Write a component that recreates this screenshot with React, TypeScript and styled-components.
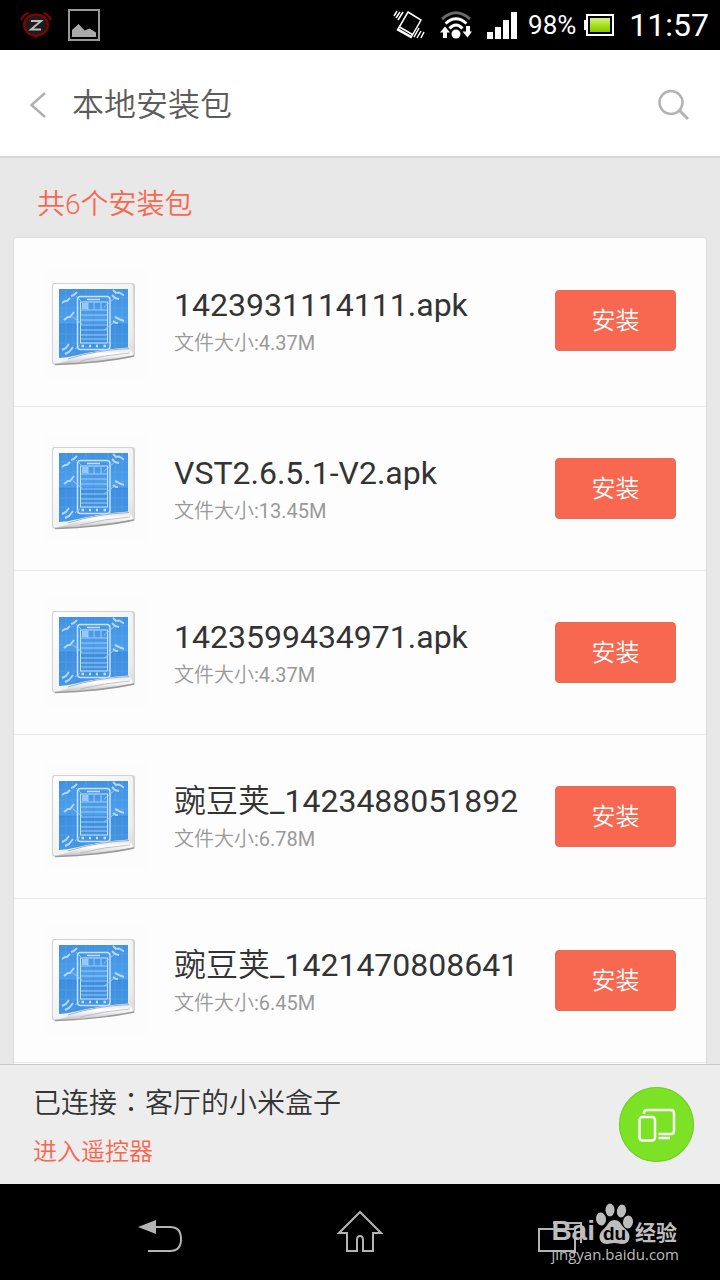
import React from "react";
import styled, { createGlobalStyle } from "styled-components";

const GlobalStyle = createGlobalStyle`
  * { box-sizing: border-box; }
  body {
    margin: 0;
    background: #e8e8e8;
    font-family: Roboto, "Noto Sans CJK SC DemiLight", "Noto Sans CJK SC", sans-serif;
    font-weight: 400;
    font-kerning: none;
  }
  button {
    border: 0;
    padding: 0;
    background: none;
    font: inherit;
    cursor: pointer;
  }
  svg { display: block; }
`;

const Screen = styled.div`
  display: flex;
  flex-direction: column;
  height: 100vh;
`;

const StatusBar = styled.div`
  flex: none;
  display: flex;
  align-items: center;
  justify-content: space-between;
  height: 50px;
  padding: 0 11px 0 20px;
  background: #000;
  color: #fff;
`;

const StatusGroup = styled.div<{ $gap: number }>`
  display: flex;
  align-items: center;
  gap: ${(p) => p.$gap}px;
`;

const Battery = styled.span`
  display: flex;
  align-items: center;
  gap: 8px;
  font-size: 26px;
  line-height: 32px;
`;

const Clock = styled.time`
  font-size: 32px;
  line-height: 40px;
`;

const Header = styled.header`
  flex: none;
  display: flex;
  align-items: center;
  height: 108px;
  padding: 4px 28px 0;
  background: #fff;
  border-bottom: 2px solid #d8d8d8;
`;

const IconButton = styled.button`
  flex: none;
  display: flex;
  align-items: center;
  justify-content: center;
`;

const Title = styled.h1`
  flex: 1;
  margin: 0 0 0 24px;
  font-size: 32px;
  line-height: 40px;
  font-weight: 350;
  color: #5c5c5c;
`;

const Content = styled.main`
  flex: 1;
  min-height: 0;
  overflow: hidden;
  padding: 0 13px;
  background: #e8e8e8;
`;

const Summary = styled.p`
  margin: 0;
  padding: 27px 24px 12px;
  font-size: 28px;
  line-height: 40px;
  font-weight: 350;
  color: #f8674f;
`;

const Card = styled.ul`
  min-height: 100%;
  margin: 0;
  padding: 1px 0 0;
  list-style: none;
  background: #fdfdfd;
  border: 1px solid #dcdcdc;
  border-radius: 4px;
`;

const Row = styled.li`
  display: flex;
  align-items: flex-start;
  height: 164px;
  padding: 0 30px 0 28px;
  border-bottom: 1px solid #e8e8e8;

  &:first-child { height: 168px; }
`;

const Thumb = styled.div`
  flex: none;
  align-self: flex-end;
  margin: 0 24px 28px 0;
`;

const Details = styled.div`
  flex: 1;
  min-width: 0;
  padding-top: 46px;
`;

const FileName = styled.h2`
  margin: 0 0 4px;
  font-size: 32px;
  line-height: 40px;
  font-weight: 400;
  white-space: nowrap;
  color: #333;
`;

const FileSize = styled.p`
  margin: 0;
  font-size: 20px;
  line-height: 28px;
  color: #999;
`;

const InstallButton = styled.button`
  flex: none;
  width: 121px;
  height: 61px;
  margin-top: 51px;
  border: 1px solid #dd705d;
  border-radius: 4px;
  background: #f8674f;
  font-size: 24px;
  line-height: 32px;
  font-weight: 350;
  color: #fff;
`;

const ConnectionBar = styled.footer`
  flex: none;
  display: flex;
  align-items: center;
  justify-content: space-between;
  height: 120px;
  padding: 0 26px 0 33px;
  background: #ededed;
  border-top: 1px solid #c8c8c8;
`;

const Connected = styled.p`
  margin: 0 0 12px;
  font-size: 28px;
  line-height: 40px;
  font-weight: 350;
  color: #333;
`;

const Colon = styled.span`
  font-family: "Noto Sans CJK TC", sans-serif;
`;

const RemoteLink = styled.a`
  display: block;
  font-size: 24px;
  line-height: 32px;
  font-weight: 350;
  color: #f8674f;
  text-decoration: none;
`;

const CastButton = styled(IconButton)`
  width: 75px;
  height: 75px;
  border-radius: 50%;
  background: #7be226;
  box-shadow: inset 0 0 0 1px #72cf27;
`;

const NavBar = styled.nav`
  position: relative;
  flex: none;
  display: grid;
  grid-template-columns: repeat(3, 1fr);
  height: 96px;
  padding: 0 60px;
  background: #000;
`;

const Watermark = styled.div`
  position: absolute;
  right: 41px;
  bottom: 17px;
  color: #bdbdbd;
`;

const Brand = styled.div`
  display: flex;
  align-items: flex-end;
  font-family: "Liberation Sans", "Noto Sans CJK SC", sans-serif;
  font-size: 28px;
  line-height: 28px;
  font-weight: 700;
`;

const BrandSuffix = styled.span`
  font-family: "Noto Sans CJK SC", sans-serif;
  font-size: 21px;
  line-height: 28px;
`;

const SiteName = styled.div`
  font-family: "Open Sans", sans-serif;
  font-size: 15px;
  line-height: 18px;
  font-weight: 500;
`;

const AlarmIcon = () => (
  <svg width="32" height="30" viewBox="0 0 32 30" fill="none" aria-hidden="true">
    <ellipse cx="16" cy="15" rx="12" ry="10.5" fill="#1c1c1c" stroke="#8a0000" strokeWidth="2" />
    <path d="M1 10Q3 5 8 3M31 10Q29 5 24 3" stroke="#8a0000" strokeWidth="2" />
    <path d="M13.5 25.5h5L16 28.5z" fill="#8a0000" />
    <path d="M11 11h10L11 19.500h10" stroke="#bbb" strokeWidth="2" />
  </svg>
);

const PictureIcon = () => (
  <svg width="32" height="32" viewBox="0 0 32 32" fill="none" aria-hidden="true">
    <rect x="1" y="1" width="30" height="30" stroke="#999" strokeWidth="2" />
    <path d="M4 28v-7l6.500-6 6 6.500 5-2 6.500 4v4.500z" fill="#aaa" />
  </svg>
);

const VibrateIcon = () => (
  <svg width="32" height="30" viewBox="0 0 32 30" fill="none" stroke="#fff" strokeWidth="1.500" aria-hidden="true">
    <path d="M15 2L28 10 18 27.500 4.500 20zM6.500 17l13 7.500M5 19l13 7.500" />
    <path d="M4 1L1 6M7 2L3 8M10 2L5 10M26 18l-5 9M28 21l-4 7M31 22l-3 6" />
  </svg>
);

const WifiIcon = () => (
  <svg width="32" height="30" viewBox="0 0 32 30" fill="none" strokeWidth="3" aria-hidden="true">
    <path d="M2 9Q16-3.500 30 9" stroke="#6a6a6a" />
    <path d="M5.500 13.500Q16 4 26.500 13.500M9.500 18.500Q16 11.500 22.500 18.500" stroke="#fff" />
    <circle cx="16" cy="24" r="4.500" fill="#fff" />
    <path d="M5 16.500l5 6H7V28H3v-5.500H0zM27.500 27.500l-5-6H26V16h4v5.500h2z" fill="#fff" />
  </svg>
);

const SignalIcon = () => (
  <svg width="30" height="28" viewBox="0 0 30 28" fill="#fff" aria-hidden="true">
    <path d="M0 21h6v7H0zM8 16h6v12H8zM16 9h6v19h-6zM24 1h6v27h-6z" />
  </svg>
);

const BatteryIcon = () => (
  <svg width="30" height="22" viewBox="0 0 30 22" aria-hidden="true">
    <defs>
      <linearGradient id="charge" x1="0" y1="0" x2="0" y2="1">
        <stop offset="0" stopColor="#d9f28a" />
        <stop offset=".5" stopColor="#a6e01c" />
        <stop offset="1" stopColor="#84c800" />
      </linearGradient>
    </defs>
    <rect x="3" y="1" width="26" height="20" fill="none" stroke="#fff" strokeWidth="2" />
    <rect x="0" y="6" width="2" height="10" fill="#fff" />
    <rect x="6" y="4" width="20" height="14" fill="url(#charge)" />
  </svg>
);

const BlueprintIcon = () => (
  <svg width="108" height="108" viewBox="0 0 108 108" fill="none" aria-hidden="true">
    <defs>
      <linearGradient id="sheet" x1="0" y1="0" x2="0" y2="1">
        <stop offset="0" stopColor="#4193e2" />
        <stop offset=".5" stopColor="#4b9fec" />
        <stop offset=".51" stopColor="#3d8ede" />
        <stop offset="1" stopColor="#4598e6" />
      </linearGradient>
      <linearGradient id="curl" x1="0" y1="0" x2=".12" y2="1">
        <stop offset="0" stopColor="#d8d8d8" />
        <stop offset=".45" stopColor="#fff" />
        <stop offset="1" stopColor="#c2c2c2" />
      </linearGradient>
      <linearGradient id="paper" x1="0" y1="0" x2="1" y2="1">
        <stop offset="0" stopColor="#fff" />
        <stop offset=".8" stopColor="#ececee" />
        <stop offset="1" stopColor="#d0d0d2" />
      </linearGradient>
    </defs>
    <rect width="108" height="108" rx="12" fill="#fcfcfc" />
    <path d="M12 13h78q3 0 3 3v70q-32 6-79 9-4 0-4-3V16q0-3 2-3z" fill="#d2d2d2" />
    <path d="M13 14h76q2 0 2 3l1 68q-32 6-77 9-4 0-4-3V17q0-3 2-3z" fill="url(#paper)" />
    <path d="M17 19h69v58.500q-28 2-52 8-9 2-17 2.500z" fill="url(#sheet)" />
    <path d="M24 19v68M31 19v67M44 19v65M52.500 19v63M66 19v60M73 19v59M80 19v58M17 28h69M17 38h69M17 47h69M17 64h69M17 73h69" stroke="#71b2f2" strokeWidth=".6" opacity=".5" />
    <path d="M17 54h69M52 19v64" stroke="#2f7dcc" opacity=".4" />
    <g stroke="#c5e1fb">
      <rect x="35.500" y="26.500" width="32.500" height="53" rx="3" strokeWidth="1.500" />
      <rect x="38.500" y="32" width="27" height="41" />
      <path d="M45 29.500h13" strokeWidth="1.500" />
      <path d="M39 40h26M39 45h26M39 50h26M39 55h26M39 60h26M39 65h26M39 69h26M46 33v7M52 33v7M59 33v7" opacity=".7" />
      <path d="M39.500 76h2.500M47 76h2M54 76h2M61.500 76h2.500" strokeWidth="2.500" />
      <path d="M40 33h6v6h-6z" fill="#b8dafa" stroke="none" opacity=".7" />
    </g>
    <g stroke="#c0defb" strokeWidth="2" opacity=".9">
      <path d="M20 33l3-2 2 0 3-3M29 26l3-1 3-3M71 20l3 3 3-.5 5 3M70 25l3 3 4 1M22 50l4-3 2 0 4-5M73 47l4 2 5 2M71 51l3 2 2 0M20 80l4-2 3-4M23 84l4-2 4-5" />
    </g>
    <path d="M34 26l5 5M62 37l11-9M31 47l9 7M62 60l12-9M33 79l5-4" stroke="#a9d0f7" strokeWidth=".8" />
    <path d="M14 94Q28 90 38 86.500 62 80 87 78.500q3 0 4 7-30 6-77 8.500z" fill="url(#curl)" />
    <path d="M26 89Q54 80 87 78.500" stroke="#8fa3b8" strokeWidth=".8" />
    <path d="M38 91Q62 85 88 83" stroke="#b5b5b5" strokeWidth=".8" />
    <path d="M13 94.500q46-1.500 79-8.500" stroke="#9a9a9a" strokeWidth="1.300" />
  </svg>
);

const DevicesIcon = () => (
  <svg width="38" height="34" viewBox="0 0 38 34" fill="none" stroke="#fff" strokeWidth="2.500" aria-hidden="true">
    <rect x="1.500" y="9" width="15.500" height="23.500" rx="3" />
    <path d="M6 6V5q0-3 3-3h24q3 0 3 3v18q0 3-3 3H20.500M20.500 30H32" />
  </svg>
);

const PawIcon = () => (
  <svg width="40" height="42" viewBox="0 0 40 42" fill="#bdbdbd" aria-hidden="true">
    <ellipse cx="6" cy="16" rx="5" ry="6.500" transform="rotate(-8 6 16)" />
    <ellipse cx="15" cy="7" rx="4.500" ry="6.500" />
    <ellipse cx="26.500" cy="8" rx="4.500" ry="6.500" transform="rotate(12 26.500 8)" />
    <ellipse cx="33" cy="19" rx="5" ry="6.500" transform="rotate(6 33 19)" />
    <path d="M19.500 17c4 0 6 3 8 6s7 5 7 11c0 4-3 7-7 7-3 0-5-1-8-1s-5 1-8 1c-4 0-7-3-7-7 0-6 5-8 7-11s4-6 8-6z" />
    <text x="19.500" y="37" textAnchor="middle" fill="#000" fontFamily="Liberation Sans, sans-serif" fontWeight="700" fontSize="19">du</text>
  </svg>
);

const packages = [
  { name: "1423931114111.apk", size: "4.37M" },
  { name: "VST2.6.5.1-V2.apk", size: "13.45M" },
  { name: "1423599434971.apk", size: "4.37M" },
  { name: "豌豆荚_1423488051892", size: "6.78M" },
  { name: "豌豆荚_1421470808641", size: "6.45M" },
];

export default function App() {
  return (
    <Screen lang="zh-CN">
      <GlobalStyle />
      <StatusBar>
        <StatusGroup $gap={16}>
          <AlarmIcon />
          <PictureIcon />
        </StatusGroup>
        <StatusGroup $gap={11}>
          <StatusGroup $gap={15}>
            <VibrateIcon />
            <WifiIcon />
            <SignalIcon />
          </StatusGroup>
          <StatusGroup $gap={15}>
            <Battery>98%<BatteryIcon /></Battery>
            <Clock>11:57</Clock>
          </StatusGroup>
        </StatusGroup>
      </StatusBar>

      <Header>
        <IconButton aria-label="返回">
          <svg width="20" height="28" viewBox="0 0 20 28" fill="none" stroke="#b0b0b0" strokeWidth="2.500">
            <path d="M17 2L3.500 14 17 26" />
          </svg>
        </IconButton>
        <Title>本地安装包</Title>
        <IconButton aria-label="搜索">
          <svg width="36" height="36" viewBox="0 0 36 36" fill="none" stroke="#b3b3b3" strokeWidth="2.500">
            <circle cx="15" cy="15.500" r="11.500" />
            <path d="M23.500 23.500L32 32" strokeWidth="3" />
          </svg>
        </IconButton>
      </Header>

      <Content>
        <Summary>共6个安装包</Summary>
        <Card>
          {packages.map((item) => (
            <Row key={item.name}>
              <Thumb><BlueprintIcon /></Thumb>
              <Details>
                <FileName>{item.name}</FileName>
                <FileSize>文件大小:{item.size}</FileSize>
              </Details>
              <InstallButton>安装</InstallButton>
            </Row>
          ))}
        </Card>
      </Content>

      <ConnectionBar>
        <div>
          <Connected>
            已连接<Colon lang="zh-TW">：</Colon>客厅的小米盒子
          </Connected>
          <RemoteLink href="#remote">进入遥控器</RemoteLink>
        </div>
        <CastButton aria-label="设备"><DevicesIcon /></CastButton>
      </ConnectionBar>

      <NavBar>
        <IconButton aria-label="后退">
          <svg width="46" height="44" viewBox="0 0 46 44" fill="none" stroke="#b4b4b4" strokeWidth="2">
            <path d="M18 17h15c8 0 11 4 11 12s-3 12-11 12H11" />
            <path d="M1 17l18-7v14z" fill="#b4b4b4" stroke="none" />
          </svg>
        </IconButton>
        <IconButton aria-label="主屏幕">
          <svg width="46" height="44" viewBox="0 0 46 44" fill="none" stroke="#b4b4b4" strokeWidth="2">
            <path d="M23 2L2 23h8v18h10V30q0-4 3-4t3 4v11h10V23h8z" />
          </svg>
        </IconButton>
        <IconButton aria-label="最近任务">
          <svg width="46" height="44" viewBox="0 0 46 44" fill="none" stroke="#b4b4b4" strokeWidth="2">
            <path d="M2 19h36v22H2zM16 13h28v20" />
          </svg>
        </IconButton>
        <Watermark>
          <Brand>
            Bai<PawIcon /><BrandSuffix>经验</BrandSuffix>
          </Brand>
          <SiteName>jingyan.baidu.com</SiteName>
        </Watermark>
      </NavBar>
    </Screen>
  );
}
